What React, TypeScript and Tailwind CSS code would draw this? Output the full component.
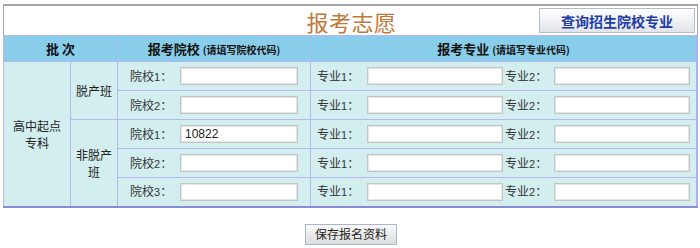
import React from "react";

const font = "font-['Noto_Sans_CJK_SC','Noto_Sans',sans-serif]";

function Field({ label, num, value, labelW, inputW }: { label: string; num: string; value?: string; labelW: string; inputW: string }) {
  return (
    <div className="flex items-center">
      <span className={`${labelW} text-[12px] text-[#333] leading-none`}>
        {label}
        <span className="text-[11px] font-['Liberation_Sans',sans-serif]">{num}</span>：
      </span>
      <input
        readOnly
        defaultValue={value ?? ""}
        className={`${inputW} h-[18px] bg-white border border-[#c4c4c4] shadow-[inset_0_0_0_1px_#e6e6e6] px-[4px] text-[12px] text-[#222] outline-none font-['Liberation_Sans',sans-serif]`}
      />
    </div>
  );
}

function SchoolCell({ n, value }: { n: string; value?: string }) {
  return (
    <td className="border border-[#b6b6f0] pl-[12px] h-[29px]">
      <Field label="院校" num={n} value={value} labelW="w-[50px]" inputW="w-[118px]" />
    </td>
  );
}

function MajorCell() {
  return (
    <td className="border border-[#b6b6f0] pl-[6px] h-[29px]">
      <div className="flex items-center">
        <Field label="专业" num="1" labelW="w-[50px]" inputW="w-[136px]" />
        <div className="w-[2px]" />
        <Field label="专业" num="2" labelW="w-[49px]" inputW="w-[136px]" />
      </div>
    </td>
  );
}

export default function App() {
  return (
    <div className={`w-[700px] h-[248px] bg-white ${font}`}>
      <div className="pt-[4px] pl-[3px]">
        <div className="w-[695px] border-t-2 border-l border-r border-[#a3a6ab]">
          <div className="h-[29px] grid grid-cols-[1fr_auto_1fr] items-center">
            <div />
            <div className="text-[22px] leading-none text-[#c07838] tracking-[0.5px] pl-[2px]">报考志愿</div>
            <div className="flex justify-end pr-[2px]">
              <button className="w-[156px] h-[25px] border border-[#b4bccb] bg-gradient-to-b from-white to-[#e2e4ea] text-[14px] font-bold text-[#1f3ea6] leading-none">
                查询招生院校专业
              </button>
            </div>
          </div>
        </div>
        <table className="w-[695px] border-collapse table-fixed border-l border-r-2 border-b-2 border-t border-l-[#9a9ad8] border-r-[#b0b0ee] border-b-[#8a8ad6] border-t-[#b6b6f0]">
          <colgroup>
            <col className="w-[67px]" />
            <col className="w-[47px]" />
            <col className="w-[193px]" />
            <col />
          </colgroup>
          <thead>
            <tr className="bg-[#88cdea] h-[26px]">
              <th colSpan={2} className="border border-[#b6b6f0] text-[13px] font-bold text-[#111] text-center">批&nbsp;次</th>
              <th className="border border-[#b6b6f0] text-[13px] font-bold text-[#111] text-center">
                报考院校 <span className="text-[10px]">(请填写院校代码)</span>
              </th>
              <th className="border border-[#b6b6f0] text-[13px] font-bold text-[#111] text-center">
                报考专业 <span className="text-[10px]">(请填写专业代码)</span>
              </th>
            </tr>
          </thead>
          <tbody className="bg-[#d3eeee]">
            <tr>
              <td rowSpan={5} className="border border-[#b6b6f0] text-center text-[12px] text-[#222] leading-[17px]">
                高中起点<br />专科
              </td>
              <td rowSpan={2} className="border border-[#b6b6f0] text-center text-[12px] text-[#222] leading-[17px]">脱产班</td>
              <SchoolCell n="1" />
              <MajorCell />
            </tr>
            <tr>
              <SchoolCell n="2" />
              <MajorCell />
            </tr>
            <tr>
              <td rowSpan={3} className="border border-[#b6b6f0] text-center text-[12px] text-[#222] leading-[17px]">
                非脱产<br />班
              </td>
              <SchoolCell n="1" value="10822" />
              <MajorCell />
            </tr>
            <tr>
              <SchoolCell n="2" />
              <MajorCell />
            </tr>
            <tr>
              <SchoolCell n="3" />
              <MajorCell />
            </tr>
          </tbody>
        </table>
        <div className="flex justify-center pt-[16px] pr-[1px]">
          <button className="w-[92px] h-[21px] border border-[#a9b7cc] bg-gradient-to-b from-[#fafafa] to-[#dcdcdc] text-[12px] text-[#222] leading-none">
            保存报名资料
          </button>
        </div>
      </div>
    </div>
  );
}
